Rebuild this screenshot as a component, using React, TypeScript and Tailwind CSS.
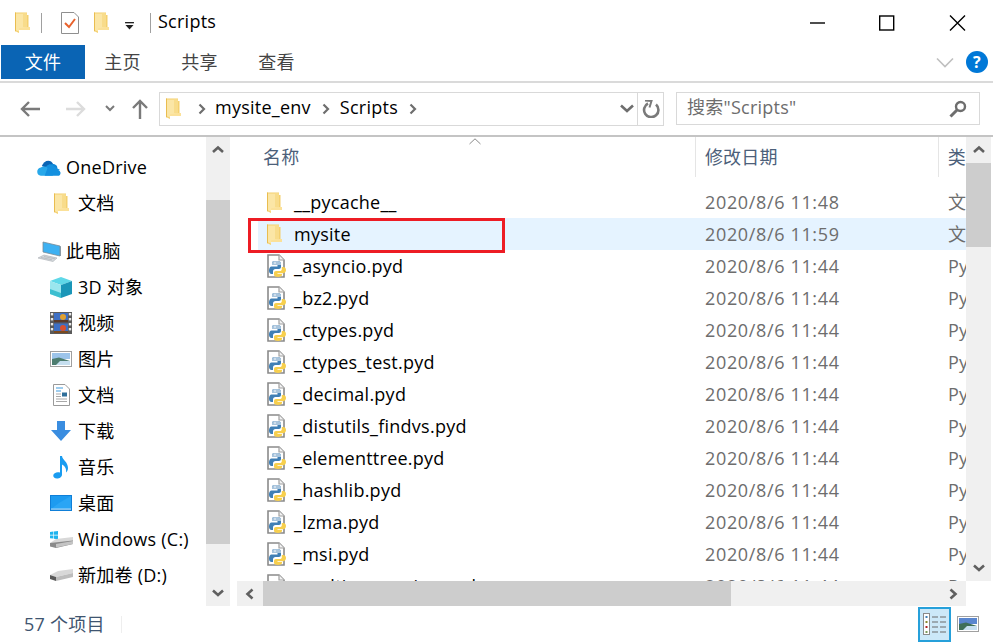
import React from "react";

const files = [
  "_asyncio.pyd",
  "_bz2.pyd",
  "_ctypes.pyd",
  "_ctypes_test.pyd",
  "_decimal.pyd",
  "_distutils_findvs.pyd",
  "_elementtree.pyd",
  "_hashlib.pyd",
  "_lzma.pyd",
  "_msi.pyd",
  "_multiprocessing.pyd",
];

function Folder({ className = "" }: { className?: string }) {
  return (
    <svg viewBox="0 0 15 21" className={`w-[15px] h-[21px] shrink-0 ${className}`}>
      <path d="M0 0.5 H12 V3 H13.5 V15 H15 V18 H4 V21 L0 19 Z" fill="#f4d06f" />
      <path d="M1 1.5 H11.5 V16 L4 17 V19.5 L1 18.3 Z" fill="#fbe6a6" />
      <path d="M8 1.5 H12 V15 H8 Z" fill="#f8dc8b" />
      <path d="M4 16.5 L11 15 H15 V18 H4 Z" fill="#fbe199" />
      <path d="M0 0.5 H1 V19.5 L0 19 Z" fill="#e9bd50" />
    </svg>
  );
}

function PyFile() {
  return (
    <svg viewBox="0 0 20 24" className="w-[20px] h-[24px] shrink-0">
      <path d="M1 1 H12 L17 6 V23 H1 Z" fill="#fff" stroke="#8a8a8a" strokeWidth="1.6" />
      <path d="M12 1 V6 H17" fill="#f2f2f2" stroke="#a0a0a0" strokeWidth="1.2" />
      <path d="M8 7 C5 7 5 8.5 5 10 V11 H10.5 V12.5 H4.5 C3 12.5 2 14.5 2 16.5 C2 18.5 3 20 4.5 20 H6 V17.5 C6 16 7 15 8.5 15 H12 C13.2 15 14 14.2 14 13 V9.5 C14 8 12.5 7 11 7 Z" fill="#3f7fb5" />
      <path d="M8 7 C5 7 5 8.5 5 10 V11 H14 V9.5 C14 8 12.5 7 11 7 Z" fill="#a9c5dd" />
      <path d="M14.8 13 V15.2 C14.8 16.4 14 17 12.8 17 H9 C7.8 17 7 17.8 7 19 V21 C7 22.3 8.8 23 11 23 C13.2 23 15 22.3 15 21 V20 H10.5 V19.2 H16.2 C17.8 19.2 19 18 19 16 C19 14 17.8 13 16.2 13 Z" fill="#f7cf4d" />
      <circle cx="8" cy="9" r="0.8" fill="#fff" />
    </svg>
  );
}

function Chevron({ dir, className = "" }: { dir: "up" | "down" | "left" | "right"; className?: string }) {
  const paths = {
    up: "M2 8 L7 3.5 L12 8",
    down: "M2 3.5 L7 8 L12 3.5",
    left: "M8.5 1.5 L3.5 6 L8.5 10.5",
    right: "M3.5 1.5 L8.5 6 L3.5 10.5",
  };
  const vertical = dir === "up" || dir === "down";
  return (
    <svg
      viewBox={vertical ? "0 0 14 12" : "0 0 12 12"}
      className={`${vertical ? "w-[14px] h-[12px]" : "w-[12px] h-[12px]"} ${className}`}
      fill="none"
      stroke="#606060"
      strokeWidth="2.6"
    >
      <path d={paths[dir]} />
    </svg>
  );
}

function Crumb() {
  return (
    <svg viewBox="0 0 8 12" className="w-[8px] h-[12px] shrink-0" fill="none" stroke="#6e6e6e" strokeWidth="2.2">
      <path d="M1.5 1.5 L6 6 L1.5 10.5" />
    </svg>
  );
}

const navIcons: Record<string, React.ReactNode> = {
  cloud: (
    <svg viewBox="0 0 25 17" className="w-[25px] h-[17px]">
      <path d="M5 7 C7 1 14 -1 17 5 L10 9 Z" fill="#0a64b4" />
      <path d="M15 5 C19 4 22 7 21 10 L13 10 Z" fill="#0f86d6" />
      <path d="M10 7 C13 4 16 5 17 7 L24 11 L18 12 L8 9 Z" fill="#1490df" />
      <path d="M4 17 C-1 17 -1 9 4 8.5 C6 7 9 7 11 9 L19 15 L16 17 Z" fill="#28a8ea" />
      <path d="M11 9 C14 7.5 17 9 18 10.5 C22 9.5 26 13 24 16 C23.5 16.8 23 17 22 17 H8 Z" fill="#1490df" />
    </svg>
  ),
  folder: <Folder />,
  pc: (
    <svg viewBox="0 0 24 21" className="w-[24px] h-[21px]">
      <path d="M6 1 L23 5 V15 L6 11 Z" fill="#3eb1f2" stroke="#7a8a96" strokeWidth="0.8" />
      <path d="M23 5 L24 5.5 V15 L23 15 Z" fill="#8a9aa5" />
      <path d="M1 17 L7 14 L20 17 L16 20.5 Z" fill="#d4d8dc" stroke="#a8adb2" strokeWidth="0.6" />
      <path d="M4 16.5 L15 18.8 M7 15.5 L18 17.8" stroke="#a8adb2" strokeWidth="0.6" />
    </svg>
  ),
  cube: (
    <svg viewBox="0 0 22 21" className="w-[22px] h-[21px]">
      <path d="M11 0 L22 4 L11 8 L0 4 Z" fill="#5fd8e8" />
      <path d="M0 4 L11 8 V21 L0 17 Z" fill="#9be6ee" />
      <path d="M22 4 L11 8 V21 L22 17 Z" fill="#1a96b8" />
      <path d="M0 12 L11 16 V21 L0 17 Z" fill="#3cbfd0" />
    </svg>
  ),
  film: (
    <svg viewBox="0 0 22 22" className="w-[22px] h-[22px]">
      <rect width="22" height="22" fill="#5a5a5a" />
      <rect x="0.8" y="1" width="2.4" height="2.4" fill="#e8e8e8" />
      <rect x="0.8" y="6" width="2.4" height="2.4" fill="#e8e8e8" />
      <rect x="0.8" y="11" width="2.4" height="2.4" fill="#e8e8e8" />
      <rect x="0.8" y="16" width="2.4" height="2.4" fill="#e8e8e8" />
      <rect x="18.8" y="1" width="2.4" height="2.4" fill="#e8e8e8" />
      <rect x="18.8" y="6" width="2.4" height="2.4" fill="#e8e8e8" />
      <rect x="18.8" y="11" width="2.4" height="2.4" fill="#e8e8e8" />
      <rect x="18.8" y="16" width="2.4" height="2.4" fill="#e8e8e8" />
      <rect x="4" y="1" width="14" height="9.5" fill="#3d6fc4" />
      <rect x="4" y="11.5" width="14" height="9.5" fill="#3d6fc4" />
      <circle cx="13" cy="5" r="3" fill="#e0a030" />
      <circle cx="13" cy="16" r="3" fill="#d8502f" />
      <rect x="4" y="8" width="14" height="2.5" fill="#5b3a28" />
      <rect x="4" y="19" width="14" height="2" fill="#7a4a20" />
    </svg>
  ),
  picture: (
    <svg viewBox="0 0 22 16" className="w-[22px] h-[16px]">
      <rect x="0.5" y="0.5" width="21" height="15" fill="#fff" stroke="#a0a0a0" />
      <rect x="2" y="2" width="18" height="6" fill="#9cc4ea" />
      <path d="M2 8 L9 6.5 L20 10 V14 H2 Z" fill="#4d7d70" />
      <path d="M10 10 L20 10 V14 H6 Z" fill="#c6dff0" />
    </svg>
  ),
  doc: (
    <svg viewBox="0 0 17 22" className="w-[17px] h-[22px]">
      <path d="M0.5 0.5 H12 L16.5 5 V21.5 H0.5 Z" fill="#fff" stroke="#9a9a9a" />
      <path d="M3 4 H10 M3 7 H8" stroke="#3f9be0" strokeWidth="1.2" />
      <rect x="9" y="8.5" width="5" height="4" fill="#2f6f9a" />
      <path d="M3 10 H8 M3 12.5 H8 M3 15 H14 M3 17.5 H14" stroke="#a8a8a8" strokeWidth="1" />
    </svg>
  ),
  download: (
    <svg viewBox="0 0 20 20" className="w-[20px] h-[20px]">
      <path d="M6 0 H14 V9 H20 L10 20 L0 9 H6 Z" fill="#3a8de0" />
    </svg>
  ),
  music: (
    <svg viewBox="0 0 16 23" className="w-[16px] h-[23px]">
      <path d="M7 0 H9 C9.5 4 15 6 15 12 C15 14 14 15.5 13 16.5 C13.8 12 11 9.5 9 8.5 V18.5 C9 21 6.5 22.5 4 22.5 C1.5 22.5 0 21 0.3 19.3 C0.6 17 3.8 15.5 7 16.5 Z" fill="#1a9cf0" />
    </svg>
  ),
  desktop: (
    <svg viewBox="0 0 22 16" className="w-[22px] h-[16px]">
      <rect width="22" height="16" fill="#0f7fd8" />
      <rect x="1" y="1" width="20" height="13" fill="#1d9bf0" />
      <path d="M1 14 L9 8 L21 1 V14 Z" fill="#2aa5f5" />
      <rect x="1" y="13.6" width="20" height="1" fill="#cbe6f9" />
    </svg>
  ),
  winDrive: (
    <svg viewBox="0 0 23 17" className="w-[23px] h-[17px]">
      <path d="M0 1 L3.4 0.5 V3.8 H0 Z M4 0.4 L8 0 V3.8 H4 Z M0 4.4 H3.4 V7.6 L0 7.2 Z M4 4.4 H8 V8.2 L4 7.7 Z" fill="#1fb4ee" />
      <path d="M0 12 L6 8 L23 6 V10 L6 13 Z" fill="#d8d8d8" />
      <path d="M0 12 L23 9.5 V13 L6 17 L0 15.5 Z" fill="#8a8a8a" />
      <path d="M6 13 L23 10 V13 L6 16.5 Z" fill="#c4c4c4" />
    </svg>
  ),
  drive: (
    <svg viewBox="0 0 23 12" className="w-[23px] h-[12px]">
      <path d="M0 6 L8 2 L23 0 V4 L6 8 Z" fill="#d8d8d8" />
      <path d="M0 6 L6 8 V12 L0 10 Z" fill="#5a5a5a" />
      <path d="M6 8 L23 4 V8 L6 12 Z" fill="#bdbdbd" />
    </svg>
  ),
};

function NavItem({ icon, label, indent = false }: { icon: string; label: string; indent?: boolean }) {
  return (
    <div className={`h-[36px] flex items-center shrink-0 ${indent ? "pl-[49px]" : "pl-[37px]"}`}>
      <div className="flex items-center justify-center shrink-0 w-[24px] mr-[5px]">
        {navIcons[icon]}
      </div>
      <span className="whitespace-nowrap">{label}</span>
    </div>
  );
}

function FileRow({ name, time, type, icon, selected = false }: { name: string; time: string; type: string; icon: React.ReactNode; selected?: boolean }) {
  return (
    <div className={`relative h-[32px] shrink-0 flex items-center ml-[21px] ${selected ? "bg-[#e5f3ff]" : ""}`}>
      <div className="w-[36px] pl-[9px] flex items-center shrink-0">{icon}</div>
      <span className="w-[411px] shrink-0 whitespace-nowrap text-black">{name}</span>
      <span className="w-[243px] shrink-0 whitespace-nowrap text-[#6d6d6d] tracking-[0.65px]">{time}</span>
      <span className="whitespace-nowrap text-[#6d6d6d]">{type}</span>
      {selected && <div className="absolute left-[-10px] top-0 w-[257px] h-[35px] border-[3px] border-[#ed1c24]" />}
    </div>
  );
}

export default function App() {
  return (
    <div className="w-[993px] h-[642px] overflow-hidden bg-white flex flex-col text-[18px] leading-[24px] tracking-[0.25px] text-black [font-family:'Open_Sans','Noto_Sans_CJK_SC',sans-serif]">
      {/* title bar */}
      <div className="h-[45px] shrink-0 flex items-center pl-[15px]">
        <Folder />
        <div className="w-px h-[20px] bg-[#a0a0a0] ml-[11px]" />
        <svg viewBox="0 0 18 22" className="w-[18px] h-[22px] ml-[19px]">
          <path d="M0.5 0.5 H13 L17.5 5 V21.5 H0.5 Z" fill="#fff" stroke="#8f8f8f" />
          <path d="M4 11 L8 15 L14 7" fill="none" stroke="#e8622c" strokeWidth="2" />
        </svg>
        <Folder className="ml-[15px]" />
        <svg viewBox="0 0 10 9" className="w-[9px] h-[8px] ml-[16px] mt-[7px]">
          <rect x="0" y="0" width="10" height="1.5" fill="#222" />
          <path d="M0.5 3.5 H9.5 L5 8.5 Z" fill="#222" />
        </svg>
        <div className="w-px h-[20px] bg-[#a0a0a0] ml-[16px]" />
        <span className="ml-[7px] flex-1 mb-[3px]">Scripts</span>
        <svg viewBox="0 0 156 16" className="w-[156px] h-[16px] mr-[27px]" fill="none" stroke="#000" strokeWidth="1.4">
          <path d="M0 8 H15" />
          <rect x="69.7" y="1" width="14" height="14" />
          <path d="M140 0.5 L155 15.5 M155 0.5 L140 15.5" />
        </svg>
      </div>
      {/* ribbon tabs */}
      <div className="h-[38px] shrink-0 flex border-b-2 border-[#dadada] pl-px pb-[2px] relative text-[#444]">
        <div className="w-[84px] h-[34px] bg-[#0a64b4] text-white flex items-center justify-center">文件</div>
        <div className="w-[77px] pr-[2px] flex items-center justify-center">主页</div>
        <div className="w-[77px] pr-[2px] flex items-center justify-center">共享</div>
        <div className="w-[77px] pr-[2px] flex items-center justify-center">查看</div>
        <div className="flex-1 flex items-center justify-end pr-[5px] gap-[12px]">
          <svg viewBox="0 0 18 11" className="w-[18px] h-[11px]" fill="none" stroke="#bfbfbf" strokeWidth="1.6">
            <path d="M1 1.5 L9 9.5 L17 1.5" />
          </svg>
          <div className="w-[22px] h-[22px] rounded-full bg-[#0078d7] text-white flex items-center justify-center text-[16px] font-bold">?</div>
        </div>
      </div>
      {/* address row */}
      <div className="h-[54px] shrink-0 flex items-center border-b-2 border-[#c4c4c4] pb-[1px]">
        <div className="w-[159px] shrink-0 flex items-center pl-[20px]">
          <svg viewBox="0 0 20 16" className="w-[20px] h-[16px]" fill="none" stroke="#7a7a7a" strokeWidth="2.4">
            <path d="M20 8 H2 M9 1 L2 8 L9 15" />
          </svg>
          <svg viewBox="0 0 20 16" className="w-[20px] h-[16px] ml-[26px]" fill="none" stroke="#dcdcdc" strokeWidth="2.4">
            <path d="M0 8 H18 M11 1 L18 8 L11 15" />
          </svg>
          <svg viewBox="0 0 10 7" className="w-[10px] h-[7px] ml-[19px]" fill="none" stroke="#7a7a7a" strokeWidth="2">
            <path d="M1 1 L5 5 L9 1" />
          </svg>
          <svg viewBox="0 0 16 20" className="w-[16px] h-[20px] ml-[17px]" fill="none" stroke="#7a7a7a" strokeWidth="2.4">
            <path d="M8 20 V2 M1 9 L8 2 L15 9" />
          </svg>
        </div>
        <div className="w-[505px] h-[34px] shrink-0 border border-[#d9d9d9] flex items-center pl-[6px]">
          <Folder />
          <div className="ml-[17px]"><Crumb /></div>
          <span className="ml-[9px] mb-[3px]">mysite_env</span>
          <div className="ml-[11px]"><Crumb /></div>
          <span className="ml-[10px] mb-[3px]">Scripts</span>
          <div className="ml-[11px]"><Crumb /></div>
          <div className="flex-1" />
          <svg viewBox="0 0 14 9" className="w-[14px] h-[9px] mr-[3px]" fill="none" stroke="#6e6e6e" strokeWidth="2.6">
            <path d="M1 1.5 L7 7 L13 1.5" />
          </svg>
          <div className="w-[26px] h-full border-l border-[#d9d9d9] flex items-center justify-center">
            <svg viewBox="0 0 18 18" className="w-[18px] h-[18px]" fill="none" stroke="#7a7a7a" strokeWidth="2.6">
              <path d="M6 3.5 A7.2 7.2 0 1 0 14 4.5" />
              <path d="M3 0.5 L9.5 1 L7.5 7.5" strokeWidth="2" />
            </svg>
          </div>
        </div>
        <div className="ml-[12px] w-[304px] h-[33px] shrink-0 border border-[#d9d9d9] flex items-center justify-between pl-[10px] pr-[12px] text-[#6d6d6d]">
          <span className="mb-[3px]">搜索"Scripts"</span>
          <svg viewBox="0 0 18 18" className="w-[18px] h-[18px]" fill="none" stroke="#6e6e6e">
            <circle cx="11.5" cy="6.5" r="4.5" strokeWidth="2.4" />
            <path d="M8 10 L1.5 16.5" strokeWidth="3" />
          </svg>
        </div>
      </div>
      {/* main */}
      <div className="flex-1 min-h-0 flex">
        {/* nav pane */}
        <div className="w-[206px] shrink-0 overflow-hidden flex flex-col pt-[12px]">
          <NavItem icon="cloud" label="OneDrive" />
          <NavItem icon="folder" label="文档" indent />
          <div className="h-[12px] shrink-0" />
          <NavItem icon="pc" label="此电脑" />
          <NavItem icon="cube" label="3D 对象" indent />
          <NavItem icon="film" label="视频" indent />
          <NavItem icon="picture" label="图片" indent />
          <NavItem icon="doc" label="文档" indent />
          <NavItem icon="download" label="下载" indent />
          <NavItem icon="music" label="音乐" indent />
          <NavItem icon="desktop" label="桌面" indent />
          <NavItem icon="winDrive" label="Windows (C:)" indent />
          <NavItem icon="drive" label="新加卷 (D:)" indent />
        </div>
        {/* nav scrollbar */}
        <div className="w-[24px] shrink-0 bg-[#f0f0f0] flex flex-col">
          <div className="h-[26px] flex items-center justify-center"><Chevron dir="up" /></div>
          <div className="h-[344px] mt-[37px] bg-[#cdcdcd]" />
          <div className="flex-1 flex items-end justify-center pb-[7px]"><Chevron dir="down" /></div>
        </div>
        <div className="w-[7px] shrink-0" />
        {/* content pane */}
        <div className="flex-1 min-w-0 flex flex-col">
          <div className="flex-1 min-h-0 flex">
            <div className="flex-1 min-w-0 flex flex-col">
              {/* column header */}
              <div className="h-[40px] shrink-0 flex items-center text-[#4c607a] relative">
                <span className="w-[458px] shrink-0 pl-[26px]">名称</span>
                <div className="w-px h-full bg-[#e5e5e5]" />
                <span className="w-[242px] shrink-0 pl-[9px]">修改日期</span>
                <div className="w-px h-full bg-[#e5e5e5]" />
                <span className="pl-[9px]">类</span>
                <svg viewBox="0 0 12 7" className="absolute left-[232px] top-[1px] w-[12px] h-[7px]" fill="none" stroke="#8a8a8a">
                  <path d="M0.5 6 L6 0.8 L11.5 6" />
                </svg>
              </div>
              {/* rows */}
              <div className="flex-1 min-h-0 overflow-hidden flex flex-col pt-[9px]">
                <FileRow name="__pycache__" time="2020/8/6 11:48" type="文" icon={<Folder />} />
                <FileRow name="mysite" time="2020/8/6 11:59" type="文" icon={<Folder />} selected />
                {files.map((f) => (
                  <FileRow key={f} name={f} time="2020/8/6 11:44" type="Py" icon={<PyFile />} />
                ))}
              </div>
            </div>
            {/* vertical scrollbar */}
            <div className="w-[25px] mr-[2px] shrink-0 bg-[#f0f0f0] flex flex-col">
              <div className="h-[26px] flex items-center justify-center"><Chevron dir="up" /></div>
              <div className="h-[84px] bg-[#cdcdcd]" />
              <div className="flex-1 flex items-end justify-center pb-[7px]"><Chevron dir="down" /></div>
            </div>
          </div>
          {/* horizontal scrollbar */}
          <div className="h-[25px] shrink-0 mr-[27px] bg-[#f0f0f0] flex items-center">
            <div className="w-[26px] flex items-center justify-center"><Chevron dir="left" /></div>
            <div className="w-[468px] h-full bg-[#cdcdcd]" />
            <div className="flex-1 flex justify-end pr-[7px]"><Chevron dir="right" /></div>
          </div>
        </div>
      </div>
      {/* status bar */}
      <div className="h-[36px] shrink-0 flex items-center pl-[24px] text-[#3f5570]">
        <span className="w-[97px] mb-[1px]">57 个项目</span>
        <div className="w-px h-[17px] bg-[#eeeeee]" />
        <div className="flex-1" />
        <div className="w-[33px] h-[35px] border-2 border-[#26a0da] bg-[#cce8f8] flex items-center justify-center">
          <svg viewBox="0 0 24 22" className="w-[24px] h-[22px]">
            <rect x="0.5" y="0.5" width="6" height="21" fill="#fff" stroke="#8a8a8a" />
            <rect x="2.5" y="3" width="2" height="2" fill="#3f7fb5" />
            <rect x="2.5" y="8" width="2" height="2" fill="#8a8a2a" />
            <rect x="2.5" y="13" width="2" height="2" fill="#b02020" />
            <rect x="2.5" y="18" width="2" height="2" fill="#7a9a5a" />
            <path d="M9 4 H15 M17 4 H23 M9 9 H15 M17 9 H23 M9 14 H15 M17 14 H23 M9 19 H15 M17 19 H23" stroke="#6a6a6a" strokeWidth="1.2" />
          </svg>
        </div>
        <svg viewBox="0 0 22 16" className="w-[22px] h-[16px] ml-[6px] mr-[14px]">
          <rect x="0.5" y="0.5" width="21" height="15" fill="#fff" stroke="#a0a0a0" />
          <rect x="2" y="2" width="18" height="6" fill="#5a86cf" />
          <path d="M2 8 L9 6.5 L20 10 V14 H2 Z" fill="#3f6f5a" />
          <path d="M10 10 L20 10 V14 H6 Z" fill="#c6dff0" />
        </svg>
      </div>
    </div>
  );
}
